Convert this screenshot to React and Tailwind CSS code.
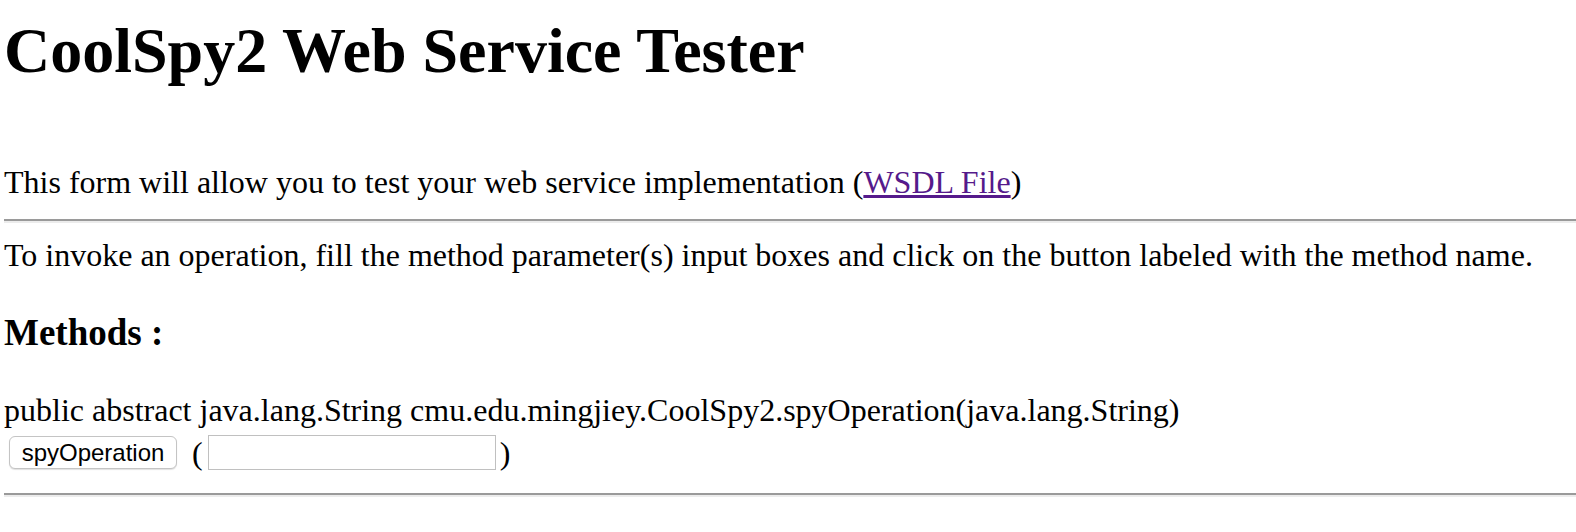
import React from "react";

const serif = { fontFamily: '"Liberation Serif", "Times New Roman", serif' };

export default function App() {
  return (
    <div className="bg-white text-black w-[1576px] h-[532px] overflow-hidden pl-[4px]" style={serif}>
      <h1 className="mt-[14px] text-[64px] leading-[73px] font-bold whitespace-nowrap">
        CoolSpy2 Web Service Tester
      </h1>

      <p className="mt-[77px] text-[32px] leading-[37px] whitespace-nowrap">
        This form will allow you to test your web service implementation (
        <a href="#" className="text-[#551a8b] underline">WSDL File</a>)
      </p>

      <hr className="mt-[18px] h-0 border-0 border-t-2 border-t-[#9a9a9a] border-b-2 border-b-[#ececec]" />

      <p className="mt-[14px] text-[32px] leading-[37px] whitespace-nowrap">
        To invoke an operation, fill the method parameter(s) input boxes and click on the button labeled with the method name.
      </p>

      <h3 className="mt-[38px] text-[37px] leading-[42px] font-bold">Methods :</h3>

      <p className="mt-[38px] text-[32px] leading-[37px] whitespace-nowrap">
        public abstract java.lang.String cmu.edu.mingjiey.CoolSpy2.spyOperation(java.lang.String)
      </p>

      <div className="mt-[6px] flex items-center h-[35px] text-[32px]">
        <button
          className="ml-[5px] h-[33px] w-[168px] bg-white border border-[#c4c4c4] rounded-[6px] shadow-[0_1px_1px_rgba(0,0,0,0.12)] text-[24px] leading-none text-black"
          style={{ fontFamily: '"Liberation Sans", Arial, sans-serif' }}
        >
          spyOperation
        </button>
        <span className="ml-[15px] mr-[5px]">(</span>
        <input type="text" className="w-[288px] h-[35px] border border-[#c0c0c0] bg-white outline-none" />
        <span className="ml-[4px]">)</span>
      </div>

      <hr className="mt-[23px] h-0 border-0 border-t-2 border-t-[#9a9a9a] border-b-2 border-b-[#ececec]" />
    </div>
  );
}
